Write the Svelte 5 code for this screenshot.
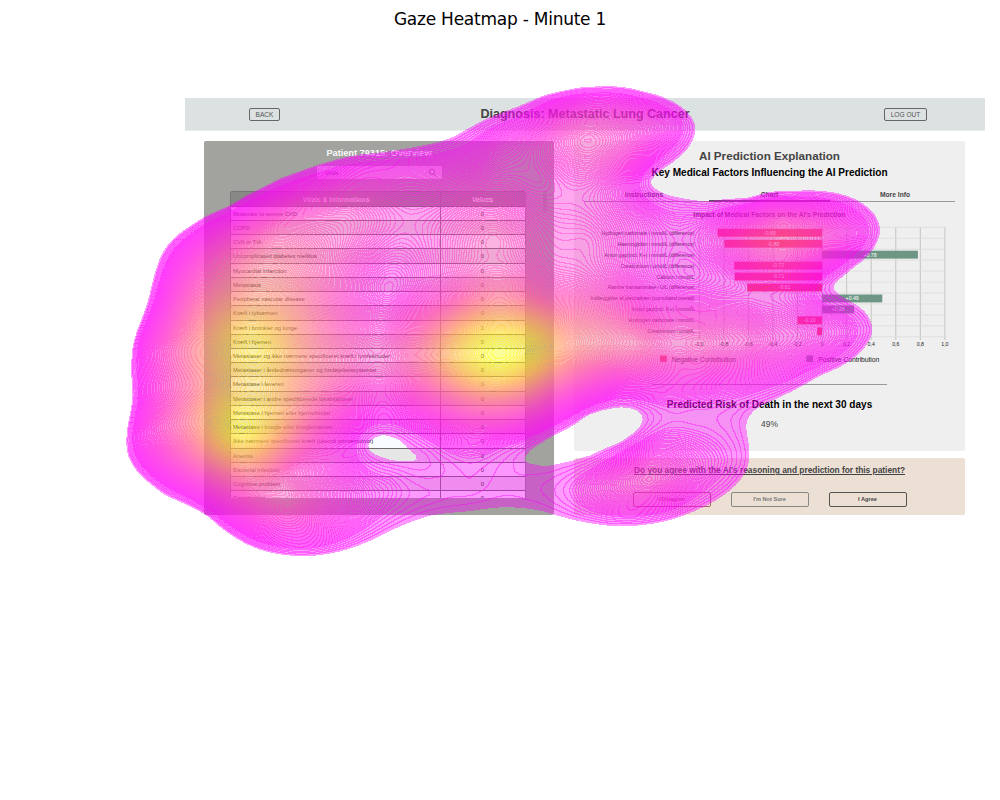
<script>
  import { onMount } from 'svelte';

  const vitals = [
    ['Moderate to severe CKD', 0],
    ['COPD', 0],
    ['CVA or TIA', 0],
    ['Uncomplicated diabetes mellitus', 0],
    ['Myocardial infarction', 0],
    ['Metastasis', 0],
    ['Peripheral vascular disease', 0],
    ['Kræft i tyktarmen', 0],
    ['Kræft i bronkier og lunge', 1],
    ['Kræft i hjernen', 0],
    ['Metastaser og ikke nærmere specificeret kræft i lymfeknuder', 0],
    ['Metastaser i åndedrætsorganer og fordøjelsessystemet', 0],
    ['Metastase i leveren', 0],
    ['Metastaser i andre specificerede lokalisationer', 0],
    ['Metastase i hjernen eller hjernehinder', 0],
    ['Metastase i knogle eller knoglemarven', 0],
    ['Ikke nærmere specificeret kræft (ukendt primærtumor)', 0],
    ['Anemia', 0],
    ['Bacterial infection', 0],
    ['Cognitive problem', 0],
    ['Constipation', 0]
  ];

  // label, value, printed value, label width
  const factors = [
    ['Hydrogen carbonate i mmol/L (difference)', -0.85, '-0.85', 93],
    ['Haemoglobin i mmol/L (difference)', -0.795, '-0.80', 77],
    ['Anion gap(incl. K+) i mmol/L (difference)', 0.78, '+0.78', 90],
    ['Creatininium i µmol/L (difference)', -0.715, '-0.72', 74],
    ['Calcium i mmol/L', -0.712, '-0.71', 38],
    ['Alanine transaminase i U/L (difference)', -0.61, '-0.61', 87],
    ['Indlæggelse af pleuradræn (cumulated overall)', 0.49, '+0.49', 104],
    ['Anion gap(incl. K+) i mmol/L', 0.26, '+0.26', 63],
    ['Hydrogen carbonate i mmol/L', -0.2, '-0.20', 66],
    ['Creatininium i µmol/L', -0.04, '', 47]
  ];
  const ticks = ['-1,0', '-0,8', '-0,6', '-0,4', '-0,2', '0', '0,2', '0,4', '0,6', '0,8', '1,0'];
  const X0 = 248.1;
  const UNIT = 122.8;

  // Points where the gaze density crosses the lowest level
  const edge = [
    600,87, 643,92, 670,101, 687,113, 694.5,125, 692,140, 677,158, 660,170, 650,181, 656,190, 673,197, 706,202,
    750,198, 790,192, 820,191.5, 845,196, 865,206, 876,218, 879.5,230, 873,248, 853,267, 835,282, 835,292,
    850,302, 865,313, 872,330, 867,343, 850,360, 820,375, 793,390, 772,400, 758,407, 748,417, 746,430,
    749,453, 747,467, 733,487, 710,503, 683,515, 653,523, 623,525.5, 593,523, 565,517, 540,510, 513,507,
    480,509, 430,515, 397,527, 363,543, 330,553, 297,555.5, 263,550, 237,538, 220,526, 207,515, 180,501,
    153,485, 137,470, 128,453, 127,437, 130,417, 133,397, 132,378, 132,360, 135,340, 142,320, 148,303,
    153,283, 160,260, 173,240, 190,227, 204,218, 230,206, 263,188, 297,173, 330,162, 380,153, 413,148,
    447,140, 467,130, 497,115, 530,102, 565,91,
    380,435, 370,440, 367,447, 375,455, 393,461, 410,461.5, 419,458, 410,449, 397,438,
    524,457, 533,447, 553,435, 587,415, 610,408, 633,408, 643,418, 638,430, 620,443, 593,455, 560,464, 535,465
  ];

  // Sampled density values, x, y, level
  const samples = [
    255,345,.92, 240,430,.97, 500,355,1.04, 480,352,.96, 240,388,.8, 215,345,.7, 203,430,.63, 195,388,.5,
    175,345,.36, 168,430,.33, 160,390,.22, 148,345,.14, 144,435,.14, 150,390,.14, 280,430,.68,
    250,255,.45, 235,290,.54, 265,310,.68, 212,260,.3, 180,260,.12, 182,300,.28, 320,230,.34, 350,210,.29,
    300,200,.19, 275,225,.33, 388,291,.14, 400,240,.21, 335,290,.32, 300,340,.6, 380,330,.25, 375,365,.3,
    340,370,.4, 340,430,.17, 315,430,.34, 290,390,.64, 360,400,.2, 375,420,.06, 290,470,.31, 292,500,.35,
    250,500,.29, 340,490,.15, 290,530,.15, 230,480,.4, 200,480,.23, 170,470,.17, 390,480,.05, 448,465,.02,
    470,485,.024, 508,465,.012, 430,495,.025, 393,449,-.012,
    450,355,.74, 415,355,.44, 540,350,.84, 565,340,.62, 600,345,.5, 640,345,.42, 700,345,.34, 750,340,.26,
    800,335,.17, 840,330,.09, 500,315,.68, 500,290,.46, 495,265,.35, 495,238,.36, 500,400,.5, 500,420,.27,
    500,440,.07, 450,400,.38, 430,420,.14, 550,385,.44, 575,395,.2, 450,300,.35, 430,265,.23, 545,300,.4,
    545,260,.26, 540,180,.17, 580,190,.2, 590,240,.24, 588,138,.32, 620,125,.24, 650,118,.14, 675,120,.07,
    600,105,.14, 560,120,.2, 630,160,.18, 610,180,.17, 635,182,.06, 640,215,.11, 690,218,.06, 693,277,.06,
    660,270,.09, 630,270,.15, 735,280,.1, 600,290,.28, 650,310,.2, 700,315,.2, 760,310,.14, 575,140,.3, 600,137,.3,
    785,240,.36, 820,238,.26, 850,235,.12, 780,215,.23, 790,202,.08, 745,235,.25, 715,237,.13, 800,265,.2,
    780,285,.13, 818,286,.035, 760,370,.12, 720,385,.09, 680,365,.23, 650,385,.14, 615,388,.12,
    690,413,.03, 650,408,.022, 720,410,.028, 650,481,.21, 650,460,.15, 690,460,.1, 722,460,.05, 615,485,.14,
    590,490,.08, 560,490,.03, 530,487,.014, 695,485,.07, 650,505,.09,
    475,160,.1, 440,180,.15, 380,190,.19, 500,145,.12, 525,125,.09, 590,435,-.03,
    600,60,-.16, 90,440,-.25, 115,300,-.15, 430,100,-.15, 250,150,-.15, 300,590,-.2, 430,550,-.07,
    500,540,-.05, 620,560,-.14, 790,450,-.12, 905,330,-.15, 915,220,-.15, 855,284,-.03, 720,180,-.06,
    730,120,-.12, 800,160,-.12, 150,520,-.1, 100,370,-.2, 150,200,-.2
  ];

  const HX = 120, HY = 80, HW = 770, HH = 485;
  let canvas;

  function kernel(d2) {
    return d2 === 0 ? 0 : d2 * Math.log(d2);
  }

  // Thin plate spline: close to the edge points, smoothed over the samples
  function fitSurface() {
    const pts = [];
    for (let i = 0; i < edge.length; i += 2) pts.push([edge[i] / 100, edge[i + 1] / 100, 0, 0.0006]);
    for (let i = 0; i < samples.length; i += 3) {
      const v = samples[i + 2];
      pts.push([samples[i] / 100, samples[i + 1] / 100, v, Math.abs(v) < 0.05 ? 0.001 : 0.03]);
    }
    const n = pts.length;
    const m = n + 3;
    const a = [];
    for (let i = 0; i < m; i++) a.push(new Float64Array(m + 1));
    for (let i = 0; i < n; i++) {
      for (let j = 0; j < n; j++) {
        const dx = pts[i][0] - pts[j][0], dy = pts[i][1] - pts[j][1];
        a[i][j] = kernel(dx * dx + dy * dy);
      }
      a[i][i] += pts[i][3];
      a[i][n] = a[n][i] = 1;
      a[i][n + 1] = a[n + 1][i] = pts[i][0];
      a[i][n + 2] = a[n + 2][i] = pts[i][1];
      a[i][m] = pts[i][2];
    }
    for (let c = 0; c < m; c++) {
      let p = c;
      for (let r = c + 1; r < m; r++) if (Math.abs(a[r][c]) > Math.abs(a[p][c])) p = r;
      [a[c], a[p]] = [a[p], a[c]];
      for (let r = c + 1; r < m; r++) {
        const f = a[r][c] / a[c][c];
        if (f !== 0) for (let k = c; k <= m; k++) a[r][k] -= f * a[c][k];
      }
    }
    const w = new Float64Array(m);
    for (let r = m - 1; r >= 0; r--) {
      let s = a[r][m];
      for (let k = r + 1; k < m; k++) s -= a[r][k] * w[k];
      w[r] = s / a[r][r];
    }
    return (x, y) => {
      x /= 100;
      y /= 100;
      let s = w[n] + w[n + 1] * x + w[n + 2] * y;
      for (let i = 0; i < n; i++) {
        const dx = x - pts[i][0], dy = y - pts[i][1];
        s += w[i] * kernel(dx * dx + dy * dy);
      }
      return s;
    };
  }

  // Contour index at a density: levels are closer together at low densities
  function level(v) {
    return Math.floor(v < 0.04 ? 120 * v : 4.8 + 225 * (v - 0.04) - 85 * (v - 0.04) * (v - 0.04));
  }

  onMount(() => {
    const f = fitSurface();
    const step = 5;
    const gw = HW / step + 2, gh = HH / step + 2;
    const grid = new Float64Array(gw * gh);
    for (let j = 0; j < gh; j++)
      for (let i = 0; i < gw; i++) grid[j * gw + i] = f(HX + i * step, HY + j * step);
    const at = (x, y) => {
      const i = Math.floor(x / step), j = Math.floor(y / step);
      const u = x / step - i, v = y / step - j, k = j * gw + i;
      return (grid[k] * (1 - u) + grid[k + 1] * u) * (1 - v) + (grid[k + gw] * (1 - u) + grid[k + gw + 1] * u) * v;
    };
    const ctx = canvas.getContext('2d');
    const img = ctx.createImageData(HW, HH);
    for (let y = 0; y < HH; y++) {
      for (let x = 0; x < HW; x++) {
        const c = [at(x, y), at(x + 1, y), at(x, y + 1), at(x + 1, y + 1)];
        const hi = Math.max(...c), lo = Math.max(0, Math.min(...c));
        if (hi < 0) continue;
        const bands = Math.min(3, level(hi) - level(lo) + 1);
        const t = Math.min(1, Math.pow((hi + lo) / 2, 1.2));
        const o = (y * HW + x) * 4;
        img.data[o] = 255;
        img.data[o + 1] = 255 * t;
        img.data[o + 2] = 255 * (1 - t);
        img.data[o + 3] = 255 * (1 - Math.pow(0.6, bands));
      }
    }
    ctx.putImageData(img, 0, 0);
  });
</script>

<main>
  <h1>Gaze Heatmap - Minute 1</h1>
  <div class="screen">
    <header>
      <span class="hbtn back">BACK</span>
      <span class="diag">Diagnosis: Metastatic Lung Cancer</span>
      <span class="hbtn out">LOG OUT</span>
    </header>
    <div class="cols">
      <section class="patient">
        <h2>Patient 79315: Overview</h2>
        <div class="search">
          <span>Vitals</span>
          <svg width="9" height="9" viewBox="0 0 9 9"><circle cx="3.8" cy="3.8" r="2.6" /><path d="M5.7 5.7 8.2 8.4" /></svg>
        </div>
        <div class="scroll">
          <div class="table">
            <div class="tr th"><span>Vitals &amp; Informations</span><span>Values</span></div>
            {#each vitals as [name, v], i}
              <div class="tr" class:odd={i % 2 === 1}><span>{name}</span><span>{v}</span></div>
            {/each}
          </div>
          <i class="thumb"></i>
        </div>
      </section>
      <div class="right">
        <section class="explain">
          <h2>AI Prediction Explanation</h2>
          <h3>Key Medical Factors Influencing the AI Prediction</h3>
          <nav><span>Instructions</span><span class="on">Chart</span><span>More Info</span></nav>
          <svg class="chart" width="391" height="161" viewBox="0 0 391 161">
            <text class="ct" x="195.3" y="12" textLength="152">Impact of Medical Factors on the AI's Prediction</text>
            {#each ticks as t, i}
              <line class="v" x1={X0 + (i - 5) * UNIT / 5} x2={X0 + (i - 5) * UNIT / 5} y1="22" y2="135" />
              <text class="tick" x={X0 + (i - 5) * UNIT / 5} y="141.3">{t}</text>
            {/each}
            {#each Array(11) as _, i}
              <line class="h" x1="125.3" x2="371" y1={22.3 + i * 10.95} y2={22.3 + i * 10.95} />
            {/each}
            {#each factors as [name, v, label, w], i}
              <text class="name" x="120.5" y={29.7 + i * 10.95} textLength={w}>{name}</text>
              <rect
                x={v < 0 ? X0 + v * UNIT : X0}
                y={23.8 + i * 10.95}
                width={Math.abs(v) * UNIT}
                height="7.9"
                fill={v < 0 ? '#f2405a' : '#6d9784'} />
              <text class="val" x={X0 + (v * UNIT) / 2} y={29.6 + i * 10.95}>{label}</text>
            {/each}
            <rect x="86" y="150.5" width="6.7" height="6.5" fill="#f2405a" />
            <text class="leg" x="97.7" y="157.2" textLength="64">Negative Contribution</text>
            <rect x="232.3" y="150.5" width="6.7" height="6.5" fill="#6d9784" />
            <text class="leg" x="244.3" y="157.2" textLength="61">Positive Contribution</text>
          </svg>
          <hr />
          <h4>Predicted Risk of Death in the next 30 days</h4>
          <p>49%</p>
        </section>
        <section class="ask">
          <div class="q">Do you agree with the AI's reasoning and prediction for this patient?</div>
          <div class="btns"><span class="no">I Disagree</span><span class="maybe">I'm Not Sure</span><span class="yes">I Agree</span></div>
        </section>
      </div>
    </div>
  </div>
  <canvas bind:this={canvas} width={HW} height={HH}></canvas>
</main>

<style>
  :global(body) { margin: 0; background: #fff; }
  main {
    position: relative;
    width: 1000px;
    height: 800px;
    overflow: hidden;
    background: #fff;
    font-family: "Liberation Sans", Arial, sans-serif;
    color: #444;
  }
  canvas { position: absolute; left: 120px; top: 80px; }
  h1, h2, h3, h4, p { margin: 0; }
  h1 {
    height: 98px;
    padding-top: 9px;
    box-sizing: border-box;
    text-align: center;
    font: 400 17px/20px "DejaVu Sans", sans-serif;
    letter-spacing: -0.24px;
    color: #000;
  }
  .screen { width: 800px; margin-left: 185px; }
  header {
    display: flex;
    align-items: center;
    justify-content: space-between;
    height: 33px;
    padding: 0 58px 0 64px;
    background: #dce1e1;
    border-bottom: 1px solid #e8ebeb;
    box-sizing: border-box;
  }
  .hbtn {
    box-sizing: border-box;
    height: 13px;
    border: 1px solid #666;
    border-radius: 2px;
    text-align: center;
    font-size: 6.6px;
    line-height: 11.5px;
    color: #555;
  }
  .back { width: 31px; }
  .out { width: 43px; }
  .diag { font-weight: 700; font-size: 12.55px; line-height: 16px; margin-left: 6px; white-space: nowrap; }
  .cols { display: flex; gap: 20px; padding: 10px 20px 0 19px; }
  .patient {
    width: 350px;
    height: 374px;
    background: #a2a29f;
    border-radius: 2px;
    display: flex;
    flex-direction: column;
    align-items: center;
  }
  .patient h2 { margin-top: 5px; font-size: 9.2px; line-height: 14px; color: #fafafa; }
  .search {
    display: flex;
    align-items: center;
    justify-content: space-between;
    box-sizing: border-box;
    width: 125px;
    height: 13px;
    margin-top: 6px;
    padding: 0 5px 0 8.5px;
    border-radius: 1px;
    background: #dededd;
    font-size: 5.6px;
  }
  .search svg { fill: none; stroke: #666; stroke-width: 0.8; }
  .scroll { display: flex; width: 350px; height: 307px; margin-top: 12px; }
  .table { width: 296px; margin-left: 25.5px; overflow: hidden; border-left: 1px solid #777; border-right: 1px solid #888; box-sizing: border-box; border-radius: 2px 2px 0 0; }
  .tr {
    display: grid;
    grid-template-columns: 210px 1fr;
    height: 14.22px;
    box-sizing: border-box;
    border-bottom: 1px solid #6c6c6c;
    background: #f8fcff;
    font-size: 5.85px;
    line-height: 14px;
    color: #222;
    white-space: nowrap;
  }
  .tr.odd { background: #e6e6e6; }
  .tr span:first-child { padding-left: 2.5px; border-right: 1px solid #777; }
  .tr span:last-child { text-align: center; }
  .tr.th {
    height: 15.8px;
    background: #888886;
    color: #eee;
    font-weight: 700;
    font-size: 6.7px;
    line-height: 15px;
    text-align: center;
    border-top: 1px solid #777;
    border-bottom-color: #666;
  }
  .thumb { width: 4px; height: 21px; margin-left: 17px; border-radius: 2px; background: #939390; }
  .right { width: 391px; }
  .explain { height: 310px; background: #efefef; border-radius: 2px; text-align: center; overflow: hidden; }
  .explain h2 { padding-top: 8px; font-size: 11.65px; line-height: 14px; }
  .explain h3 { font-size: 10.07px; line-height: 14px; margin-top: 3px; color: #000; }
  nav {
    display: grid;
    grid-template-columns: 120px 131px 120px;
    height: 14px;
    margin: 8px 10px 0;
    box-sizing: border-box;
    border-bottom: 1px solid #999;
    font-size: 6.7px;
    font-weight: 700;
    line-height: 13px;
  }
  nav .on { margin: 0 5px; line-height: 13px; border-bottom: 2px solid #555; height: 12px; }
  .chart { display: block; margin-top: 3px; }
  .chart text { font-family: "Liberation Sans", Arial, sans-serif; fill: #222; }
  .chart .ct { font-size: 6.6px; font-weight: 700; text-anchor: middle; fill: #333; }
  .chart .tick { font-size: 5.2px; text-anchor: middle; }
  .chart .name { font-size: 5.2px; text-anchor: end; }
  .chart .val { font-size: 5.2px; text-anchor: middle; fill: #fff; }
  .chart .leg { font-size: 6.8px; }
  .v { stroke: #c4c4c0; stroke-width: 1; }
  .h { stroke: #dcdcdc; stroke-width: 0.8; }
  hr { width: 235px; height: 1px; border: 0; margin: 18px auto 0; background: #999; }
  h4 { margin-top: 13px; font-size: 10.05px; line-height: 14px; color: #000; }
  p { margin-top: 6px; font-size: 8.4px; line-height: 12px; }
  .ask { height: 57px; margin-top: 7px; background: #ecdfd4; border-radius: 2px; text-align: center; }
  .q { padding-top: 6px; font-size: 8.35px; line-height: 13px; font-weight: 700; text-decoration: underline; white-space: nowrap; }
  .btns { display: flex; justify-content: center; gap: 20px; margin-top: 15px; }
  .btns span {
    box-sizing: border-box;
    width: 78px;
    height: 15px;
    border: 1px solid #555;
    border-radius: 2px;
    font-size: 5.6px;
    font-weight: 700;
    line-height: 13px;
  }
  .btns .no { border-color: #a66; color: #a66; }
  .btns .maybe { border-color: #888; color: #777; }
</style>
